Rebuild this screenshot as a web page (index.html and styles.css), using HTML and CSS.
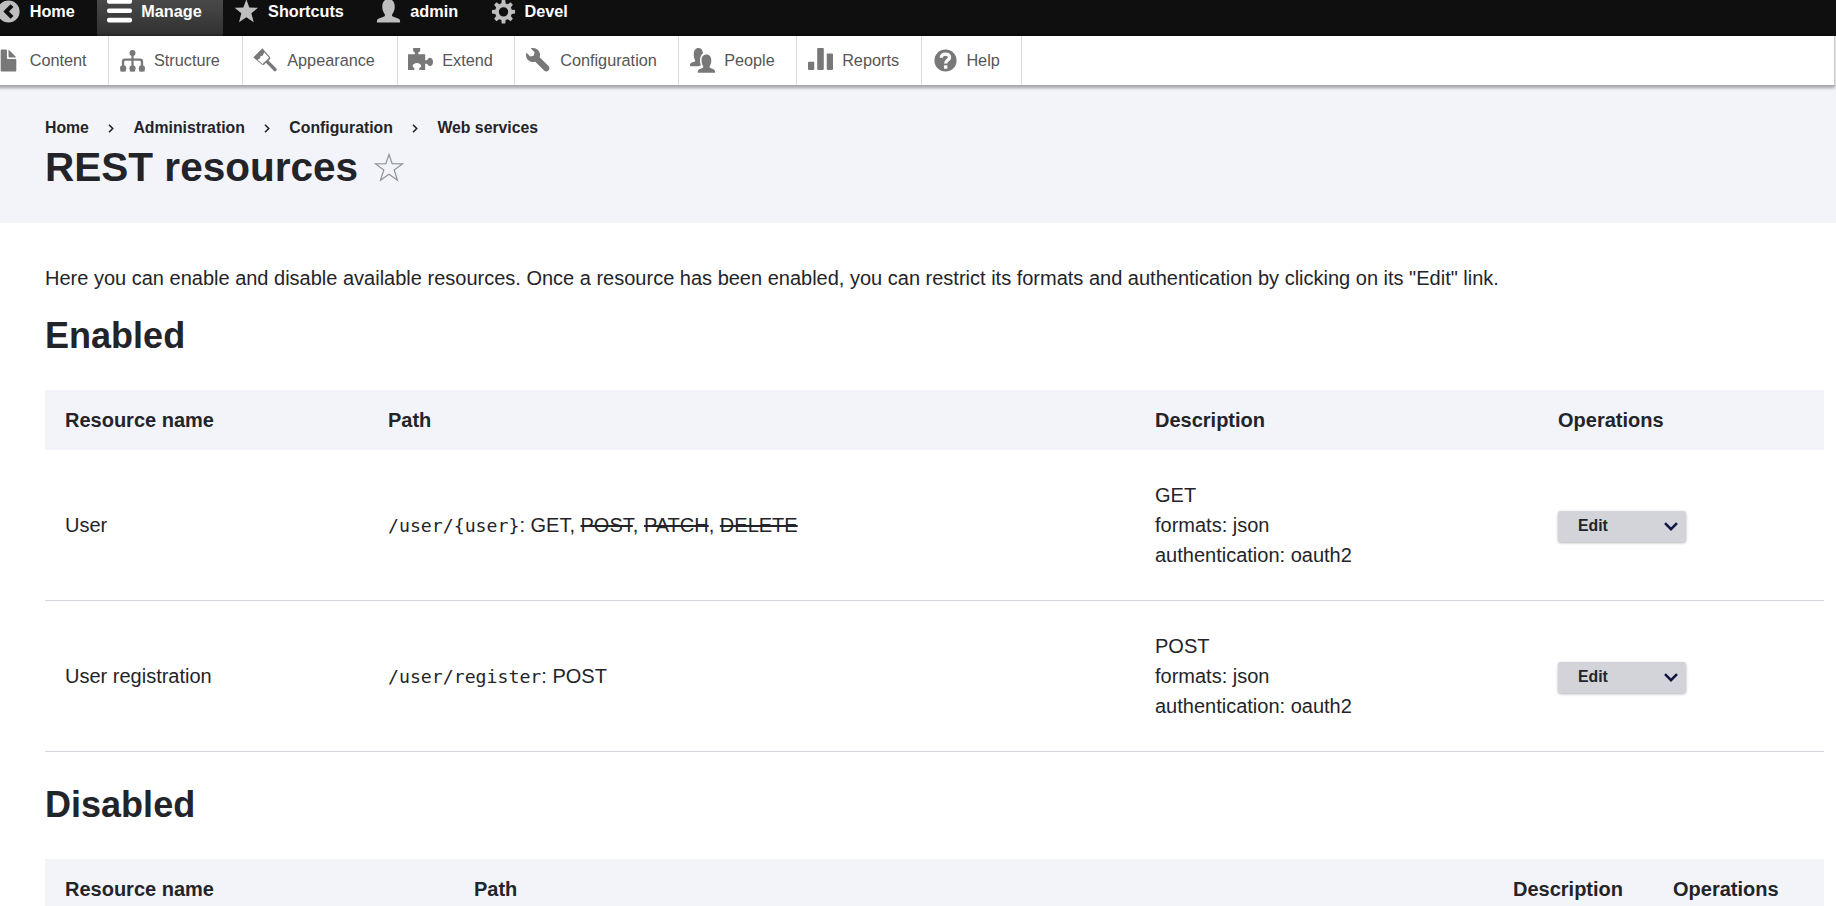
FILE: index.html
```html
<!DOCTYPE html>
<html lang="en">
<head>
<meta charset="utf-8">
<title>REST resources</title>
<link rel="stylesheet" href="styles.css">
</head>
<body>
<nav class="bar">
  <a class="tab"><svg class="icon" viewBox="0 0 16 16"><path fill-rule="evenodd" d="M8 .9a7.1 7.1 0 1 0 0 14.200a7.100 7.100 0 0 0 0-14.200zM9.300 3.400l1.900 1.700L8.300 8l2.900 2.900-1.900 1.700L4.700 8z"/></svg>Home</a>
  <a class="tab tab-active"><svg class="icon" viewBox="0 0 16 16"><rect width="16" height="3" rx="1.25"/><rect y="6" width="16" height="3" rx="1.25"/><rect y="12" width="16" height="3" rx="1.25"/></svg>Manage</a>
  <a class="tab"><svg class="icon" viewBox="0 0 16 16"><path d="M7.900.2l1.900 5.300 5.600.1-4.300 3.500 1.500 5.700-4.700-3.200-4.700 3.200 1.500-5.700L.4 5.600l5.600-.1z"/></svg>Shortcuts</a>
  <a class="tab"><svg class="icon" viewBox="0 0 16 16"><path d="M.6 15v-.9c0-.9.7-1.500 1.600-1.800l2.700-.9c.7-.2 1-.8.8-1.500C4.700 8.600 4 7 4 4.800 4 2 5.400 0 8 0s4 2 4 4.800c0 2.200-.7 3.800-1.700 5.100-.2.700.1 1.300.8 1.500l2.700.9c.9.300 1.600.9 1.600 1.800v.9z"/></svg>admin</a>
  <a class="tab"><svg class="icon" viewBox="0 0 16 16"><path fill-rule="evenodd" d="M6.900.7h2.200l.3 2.100 1.300.6 1.800-1.300 1.500 1.500-1.300 1.800.6 1.400 2.100.3v2.200l-2.100.3-.6 1.300 1.300 1.800-1.500 1.500-1.800-1.300-1.300.6-.3 2.100H6.900l-.3-2.100-1.300-.6-1.800 1.300L2 12.700l1.300-1.800-.6-1.300-2.100-.3V7.100l2.100-.3.600-1.400L2 3.600l1.500-1.500 1.800 1.300 1.300-.6zM8 5.200a3 3 0 1 0 0 6a3 3 0 0 0 0-6z"/></svg>Devel</a>
</nav>
<nav class="tray">
  <a class="item"><svg class="icon" viewBox="0 0 16 16"><path d="M12.502 7h-5c-.276 0-.502-.225-.502-.5v-5c0-.275-.225-.5-.5-.5h-3c-.276 0-.5.225-.5.5v13.029c0 .275.224.5.5.5h9.002c.275 0 .5-.225.5-.5v-7.029c0-.275-.225-.5-.5-.5zM8.502 6h4c.275 0 .34-.159.146-.354l-4.293-4.292c-.195-.195-.353-.129-.353.146v4c0 .275.225.5.5.5z"/></svg>Content</a>
  <a class="item"><svg class="icon" viewBox="0 0 16 16"><circle cx="8" cy="3.200" r="1.900"/><path d="M7.300 3h1.400v3.700h4.400c1 0 1.700.7 1.700 1.700v4h-1.500V8.800c0-.4-.2-.6-.6-.6h-4v4.200H7.300V8.200h-4c-.4 0-.6.200-.6.600v3.600H1.200v-4c0-1 .7-1.700 1.700-1.700h4.400z"/><circle cx="2" cy="13" r="2"/><circle cx="8" cy="13" r="2"/><circle cx="14" cy="13" r="2"/><path d="M.6 13h2.800l.4 2H.2zM6.600 13h2.800l.4 2H6.200zM12.600 13h2.800l.4 2h-3.600z"/></svg>Structure</a>
  <a class="item"><svg class="icon" viewBox="0 0 16 16"><path fill-rule="evenodd" d="M6 .2L.2 6l5.900 4.900 1-.2 1.200-1.200 5 5c.5.500 1.200.5 1.600 0 .4-.4.400-1.100-.1-1.600L9.900 8l1.200-1.200-.2-1zM7.200 2.700l3.100 3.500-4.200 4-3.200-2.700 1.700-.9.200-1.300 1.500-.5z"/></svg>Appearance</a>
  <a class="item"><svg class="icon" viewBox="0 0 16 16"><path d="M0 4h4.400V2.900c0-.5-1.100-.5-1.100-1.200V0h4.500v1.700c0 .7-1.200.7-1.200 1.200V4H11v3.800h1c.6 0 .8-1.500 2-1.500s2 1.100 2 2.600-.8 2.600-2 2.600-1.400-1.500-2-1.500h-1V14H7.200v-.9c0-.6 1.200-.5 1.200-1.600 0-1-1.200-1.900-2.700-1.900S3 10.500 3 11.500c0 1.100 1.100 1 1.100 1.600v.9H0z"/></svg>Extend</a>
  <a class="item"><svg class="icon" viewBox="0 0 16 16"><path d="M14.416 11.586l-.01-.008v-.001l-5.656-5.656c.15-.449.252-.921.252-1.421 0-2.485-2.016-4.500-4.502-4.500-.505 0-.981.102-1.434.255l2.431 2.431-.588 2.196-2.196.588-2.445-2.445c-.162.464-.268.956-.268 1.475 0 2.486 2.014 4.500 4.500 4.500.5 0 .972-.102 1.421-.251l5.667 5.665c.781.781 2.047.781 2.828 0s.781-2.047 0-2.828z"/></svg>Configuration</a>
  <a class="item"><svg class="icon" viewBox="0 0 16 16"><path d="M5 15.900v-.9c0-.8.500-1.300 1.300-1.600l1.600-.6c.6-.2.700-.7.500-1.200-.6-.9-1-1.900-1-3.600 0-2.300 1.100-3.800 3.100-3.800s3.100 1.500 3.100 3.800c0 1.700-.4 2.700-1 3.600-.2.500-.1 1 .5 1.200l1.600.6c.8.300 1.300.8 1.300 1.600v.9z"/><path d="M0 11.700v-.9c0-.7.400-1.200 1.200-1.500l1.500-.5c.6-.2.700-.7.500-1.200-.5-.8-.8-1.800-.8-3.400C2.400 1.700 3.500 0 5.400 0c1.700 0 2.700 1.200 2.900 3.300-1.200.9-1.900 2.500-1.900 4.600 0 1.400.2 2.300.6 3.100-.6.200-1.100.4-1.500.7z"/></svg>People</a>
  <a class="item"><svg class="icon" viewBox="0 0 16 16"><rect y="8.800" width="4" height="5.200" rx=".5"/><rect x="5.900" width="4.200" height="14" rx=".5"/><rect x="12" y="3.500" width="4" height="10.500" rx=".5"/></svg>Reports</a>
  <a class="item"><svg class="icon" viewBox="0 0 16 16"><circle cx="8" cy="8" r="7.100"/><path class="cut-line" d="M5.300 6.300C5.300 4.700 6.400 3.900 8 3.900s2.600.8 2.600 2.100C10.600 7.700 8.100 7.800 8.100 9.900"/><rect class="cut" x="7" y="11.100" width="2.200" height="2.100" rx=".3"/></svg>Help</a>
</nav>
<header class="region">
  <div class="crumbs">
    <a>Home</a><svg class="sep" viewBox="0 0 6 9"><path d="M1 .8l3.700 3.700L1 8.200"/></svg><a>Administration</a><svg class="sep" viewBox="0 0 6 9"><path d="M1 .8l3.700 3.700L1 8.200"/></svg><a>Configuration</a><svg class="sep" viewBox="0 0 6 9"><path d="M1 .8l3.700 3.700L1 8.200"/></svg><a>Web services</a>
  </div>
  <div class="title-row">
    <h1>REST resources</h1>
    <svg class="star" viewBox="0 0 30 30"><path d="M15 2.500l3.200 9.200 10.300.2-8.300 6 3.300 10.400-8.500-6-8.500 6 3.300-10.400-8.300-6 10.300-.2z"/></svg>
  </div>
</header>
<main class="content">
  <p class="intro">Here you can enable and disable available resources. Once a resource has been enabled, you can restrict its formats and authentication by clicking on its "Edit" link.</p>
  <h2>Enabled</h2>
  <div class="table">
    <div class="row head"><div>Resource name</div><div>Path</div><div>Description</div><div>Operations</div></div>
    <div class="row">
      <div>User</div>
      <div><code>/user/{user}</code>: GET, <del>POST</del>, <del>PATCH</del>, <del>DELETE</del></div>
      <div>GET<br>formats: json<br>authentication: oauth2</div>
      <div><span class="drop">Edit<svg class="chev" viewBox="0 0 14 9"><path d="M1 1.200l6 6 6-6"/></svg></span></div>
    </div>
    <div class="row">
      <div>User registration</div>
      <div><code>/user/register</code>: POST</div>
      <div>POST<br>formats: json<br>authentication: oauth2</div>
      <div><span class="drop">Edit<svg class="chev" viewBox="0 0 14 9"><path d="M1 1.200l6 6 6-6"/></svg></span></div>
    </div>
  </div>
  <h2 class="second">Disabled</h2>
  <div class="table disabled">
    <div class="row head"><div>Resource name</div><div>Path</div><div>Description</div><div>Operations</div></div>
  </div>
</main>
</body>
</html>
```
FILE: styles.css
```css
* { box-sizing: border-box; }
html { overflow: hidden; }
body {
  margin: 0;
  height: 906px;
  overflow: hidden;
  background: #fff;
  color: #232429;
  font: 20px/30px "Liberation Sans", Arial, sans-serif;
}
.bar {
  display: flex;
  height: 49px;
  margin-top: -13px;
  background: #0f0f0f;
  color: #fff;
  font-size: 16.25px;
  line-height: 28px;
  font-weight: bold;
}
.tab, .item {
  display: flex;
  align-items: center;
  gap: 8.860px;
  padding: 0 21.670px 2px 10.830px;
  white-space: nowrap;
}
.tab:first-child, .item:first-child { margin-left: -15px; }
.tab { fill: #bebebe; }
.tab-active {
  fill: #fff;
  background: linear-gradient(rgba(255,255,255,.25) 20%, transparent 200%);
}
.icon { width: 25px; height: 25px; flex: none; margin-top: 2px; }
.tray {
  position: relative;
  display: flex;
  height: 49px;
  margin-right: 1px;
  background: #fff;
  border-right: 1px solid #ccc;
  box-shadow: 0 1px 0 #aaa, -2px 1px 3px 2px rgba(0,0,0,.333);
  color: #565656;
  fill: #787878;
  font-size: 16.25px;
}
.item { border-right: 1px solid #ddd; }
.cut { fill: #fff; }
.cut-line { fill: none; stroke: #fff; stroke-width: 2.100; }
.region {
  height: 138px;
  padding: 28px 45px 0;
  background: #f3f4f9;
}
.crumbs {
  display: flex;
  align-items: center;
  height: 29px;
  font-size: 15.800px;
  font-weight: bold;
}
.sep { width: 6px; height: 9px; margin: 1px 19px 0 19.500px; fill: none; stroke: #232429; stroke-width: 1.600; }
.title-row { display: flex; align-items: center; height: 50px; gap: 16px; }
h1 { margin: 0; font-size: 40.540px; line-height: 50px; }
.star { width: 30px; height: 30px; fill: none; stroke: #8e929c; stroke-width: 1.200; }
.content { padding: 40px 12px 0 45px; }
.intro { margin: 0; }
h2 { margin: 20px 0 32px; font-size: 36.040px; line-height: 45px; }
h2.second { margin-top: 30px; }
.row {
  display: grid;
  grid-template-columns: 323px 767px 403px 1fr;
  align-items: center;
  height: 151px;
  border-bottom: 1px solid #d3d4d9;
}
.row > div { padding-left: 20px; }
.head { height: 60px; background: #f3f4f9; border: 0; font-weight: bold; }
.disabled .row { grid-template-columns: 409px 1039px 160px 1fr; }
code { font: 18.200px/1 "DejaVu Sans Mono", monospace; }
del { text-decoration-thickness: 2px; }
.drop {
  display: flex;
  align-items: center;
  justify-content: space-between;
  width: 128px;
  height: 31px;
  margin-top: 2px;
  padding: 0 8px 0 20px;
  border-radius: 3px;
  background: #d3d4d9;
  box-shadow: 0 1px 3px rgba(0,0,0,.3);
  font-size: 15.800px;
  font-weight: bold;
}
.chev { width: 14px; height: 9px; margin-top: 1px; fill: none; stroke: #0f1640; stroke-width: 2.500; }
```
